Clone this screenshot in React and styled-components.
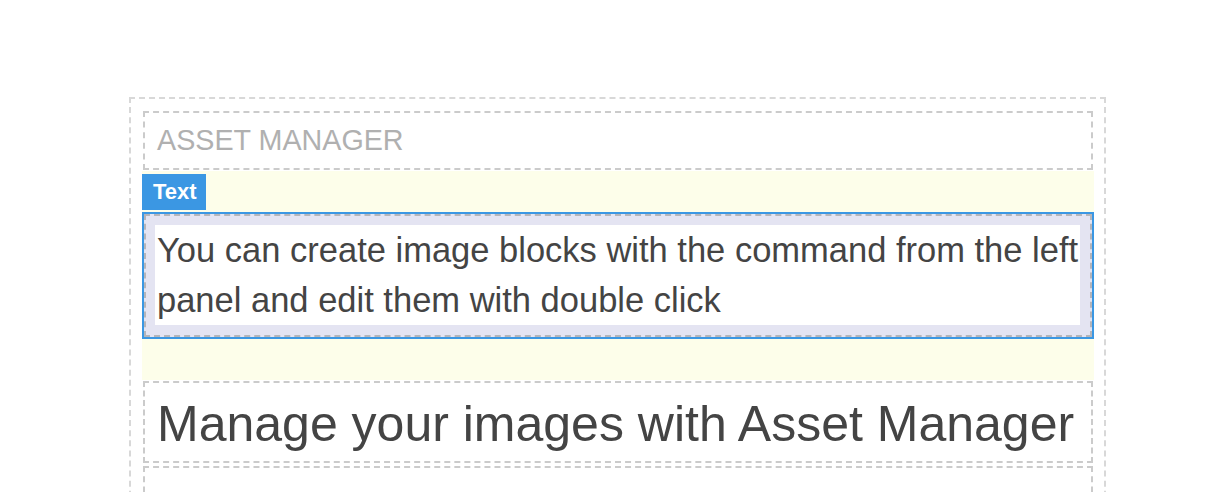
import styled, { createGlobalStyle } from "styled-components";

const GlobalStyle = createGlobalStyle`
    html, body {
        margin: 0;
        padding: 0;
        background: #fff;
        font-family: "Liberation Sans", Arial, Helvetica, sans-serif;
    }
`;

const Canvas = styled.div`
    width: 1226px;
    height: 492px;
    overflow: hidden;
    padding-top: 97px;
    box-sizing: border-box;
`;

const Cell = styled.div`
    margin-left: 129px;
    width: 977px;
    height: 420px;
    box-sizing: border-box;
    outline: 2px dashed rgba(170, 170, 170, 0.45);
    outline-offset: -2px;
    padding: 13px 12px 0 13px;
`;

const Block = styled.div`
    box-sizing: border-box;
    height: ${(p) => p.$height}px;
    padding-left: 15px;
    outline: 2px dashed rgba(170, 170, 170, 0.6);
    outline-offset: -3px;
    margin-bottom: ${(p) => p.$gap || 0}px;
`;

const Title = styled.div`
    font-size: 28.7px;
    line-height: 60px;
    color: #b0b0b0;
`;

const Heading = styled.h1`
    margin: 0;
    font-size: 50px;
    font-weight: 400;
    line-height: 88px;
    color: #444;
`;

const Padding = styled.div`
    background: #fdfeea;
    padding: 3px 0 41px;
`;

const Badge = styled.div`
    display: inline-block;
    background: #3b97e3;
    color: #fff;
    font-weight: 700;
    font-size: 22px;
    height: 36px;
    line-height: 36px;
    padding: 0 9px 0 11px;
    margin-bottom: 2px;
    vertical-align: top;
`;

const Selected = styled.div`
    border: 2px solid #3b97e3;
    background: #e4e4f2;
    padding: 11px 12px 12px 11px;
    outline: 2px dashed rgba(150, 150, 150, 0.6);
    outline-offset: -4px;
`;

const TextBody = styled.div`
    background: #fff;
    padding-left: 2px;
    font-size: 34.5px;
    line-height: 50px;
    color: #444;
`;

export default function App() {
    return (
        <>
            <GlobalStyle />
            <Canvas>
                <Cell>
                    <Block $height={61}>
                        <Title>ASSET MANAGER</Title>
                    </Block>
                    <Padding>
                        <Badge>Text</Badge>
                        <Selected>
                            <TextBody>
                                You can create image blocks with the command from the left
                                panel and edit them with double click
                            </TextBody>
                        </Selected>
                    </Padding>
                    <Block $height={84} $gap={1}>
                        <Heading>Manage your images with Asset Manager</Heading>
                    </Block>
                    <Block $height={80} />
                </Cell>
            </Canvas>
        </>
    );
}
